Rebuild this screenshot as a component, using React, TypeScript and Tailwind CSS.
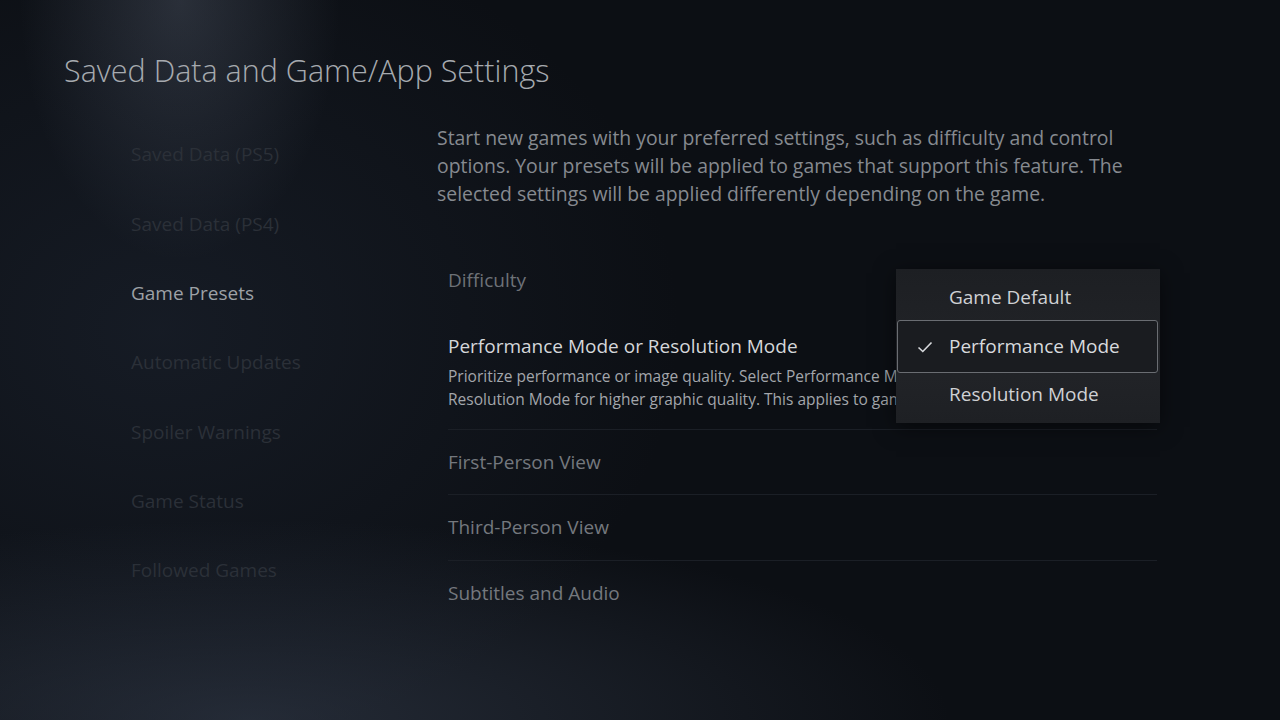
import React from "react";

const nav = [
  { label: "Saved Data (PS5)", active: false },
  { label: "Saved Data (PS4)", active: false },
  { label: "Game Presets", active: true },
  { label: "Automatic Updates", active: false },
  { label: "Spoiler Warnings", active: false },
  { label: "Game Status", active: false },
  { label: "Followed Games", active: false },
];

export default function App() {
  return (
    <div
      className="relative w-[1280px] h-[720px] overflow-hidden bg-[#0c0f14] text-[#a9acb1]"
      style={{ fontFamily: '"Open Sans", "Noto Sans", sans-serif' }}
    >
      {/* background haze */}
      <div className="pointer-events-none absolute inset-0 bg-[radial-gradient(ellipse_160px_260px_at_180px_0px,rgba(120,130,150,0.28),transparent)]" />
      <div className="pointer-events-none absolute inset-0 bg-[radial-gradient(ellipse_520px_420px_at_160px_330px,rgba(40,50,68,0.35),transparent)]" />
      <div className="pointer-events-none absolute inset-0 bg-[radial-gradient(ellipse_700px_200px_at_250px_720px,rgba(60,70,88,0.5),transparent)]" />

      <div className="relative flex flex-col">
        <h1 className="pl-[64px] pt-[51px] h-[120px] text-[30.5px] font-light leading-[38px] text-[#a6aaaf]">
          Saved Data and Game/App Settings
        </h1>

        <div className="flex">
          {/* left nav */}
          <div className="w-[437px] pl-[131px] flex flex-col">
            {nav.map((n) => (
              <div
                key={n.label}
                className={`h-[69.3px] flex items-center text-[19px] ${
                  n.active ? "text-[#9da1a6]" : "text-[#2b3038]"
                }`}
              >
                {n.label}
              </div>
            ))}
          </div>

          {/* right content */}
          <div className="w-[720px] flex flex-col">
            <p className="pt-[4px] text-[19.4px] leading-[28px] text-[#868a90] pr-[4px]">
              Start new games with your preferred settings, such as difficulty and control options. Your presets will be applied to games that support this feature. The selected settings will be applied differently depending on the game.
            </p>

            <div className="mt-[40px] pl-[11px] flex flex-col">
              <div className="h-[65px] flex items-center text-[19px] text-[#6d7177]">Difficulty</div>
              <div className="pt-[20px] pb-[18px] border-b border-[#1b1f26]">
                <div className="text-[19px] leading-[26px] text-[#d5d7da]">
                  Performance Mode or Resolution Mode
                </div>
                <div className="mt-[6px] w-[448px] text-[15.5px] leading-[23px] text-[#a3a6ab] whitespace-nowrap overflow-hidden">
                  Prioritize performance or image quality. Select Performance Mode for smoother gameplay or
                  <br />
                  Resolution Mode for higher graphic quality. This applies to games that support this feature.
                </div>
              </div>
              <div className="h-[65px] flex items-center text-[19px] text-[#74787e] border-b border-[#1b1f26]">
                First-Person View
              </div>
              <div className="h-[66px] flex items-center text-[19px] text-[#74787e] border-b border-[#1b1f26]">
                Third-Person View
              </div>
              <div className="h-[65px] flex items-center text-[19px] text-[#74787e]">Subtitles and Audio</div>
            </div>
          </div>
        </div>
      </div>

      {/* dropdown */}
      <div className="absolute left-[896px] top-[269px] w-[264px] h-[154px] bg-[linear-gradient(180deg,#1d1f23,#222428_60%,#1e2024)] shadow-[0_4px_20px_rgba(0,0,0,0.5)] flex flex-col pt-[5px]">
        <div className="h-[46px] flex items-center pl-[53px] text-[19px] text-[#cfd1d4]">Game Default</div>
        <div className="mx-[1px] w-[261px] h-[53px] flex items-center border-[1.5px] border-[#6a6d72] rounded-[3px] bg-[#1a1c20] text-[19px] text-[#d8dadd]">
          <svg width="16" height="12" viewBox="0 0 16 12" className="ml-[19px] mr-[16px]">
            <path d="M1.5 6.5 L5.8 10.5 L14.5 1.5" fill="none" stroke="#d8dadd" strokeWidth="1.6" />
          </svg>
          Performance Mode
        </div>
        <div className="h-[42px] flex items-center pl-[53px] text-[19px] text-[#cfd1d4]">Resolution Mode</div>
      </div>
    </div>
  );
}
